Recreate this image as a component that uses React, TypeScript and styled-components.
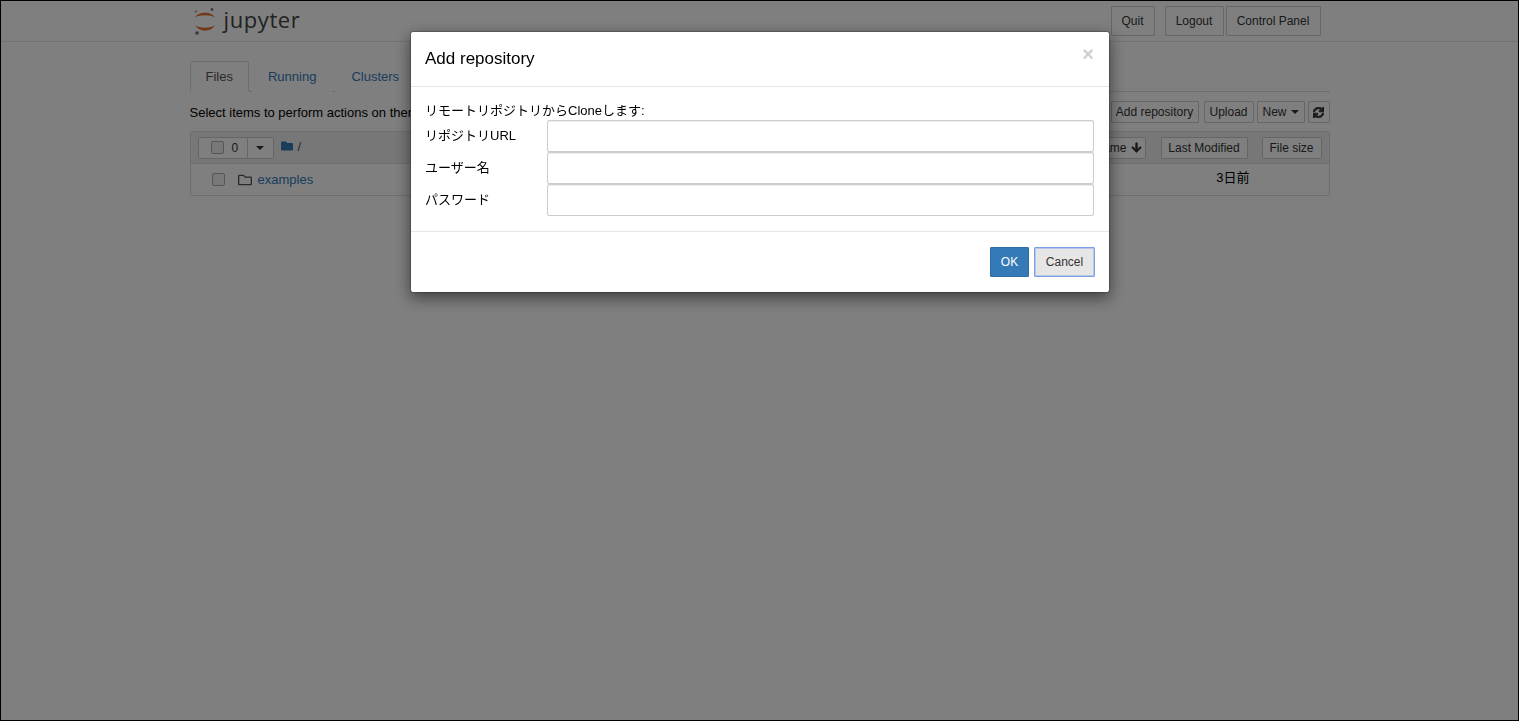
import React from "react";
import styled, { createGlobalStyle } from "styled-components";
import { FaArrowDown, FaFolder, FaRegFolder, FaSync } from "react-icons/fa";

const GlobalStyle = createGlobalStyle`
  * {
    box-sizing: border-box;
  }
  html, body {
    margin: 0;
    padding: 0;
    background: #fff;
    font-family: "Liberation Sans", Arial, sans-serif;
    font-size: 13px;
    color: #000;
  }
`;

const Frame = styled.div`
  height: 721px;
  border: 1px solid #000;
  overflow: hidden;
`;

const Header = styled.div`
  height: 41px;
  border-bottom: 1px solid #e7e7e7;
`;

const Container = styled.div`
  width: 1140px;
  margin: 0 auto;
  display: flex;
  align-items: flex-start;
`;

const Logo = styled.div`
  display: flex;
  align-items: center;
  gap: 6px;
  margin: 5px 0 0 4px;
  height: 30px;
`;

const LogoText = styled.span`
  font-family: "Open Sans", sans-serif;
  font-size: 22px;
  letter-spacing: 0.6px;
  color: #444;
  line-height: 30px;
  margin-top: -5px;
`;

const HeaderButtons = styled.div`
  margin-left: auto;
  margin-right: 9px;
  margin-top: 5px;
  display: flex;
`;

const Button = styled.div<{ $w: number; $h?: number; $ml?: number }>`
  width: ${(p) => p.$w}px;
  height: ${(p) => p.$h ?? 22}px;
  margin-left: ${(p) => p.$ml ?? 0}px;
  border: 1px solid #ccc;
  border-radius: 1px;
  background: #fff;
  color: #333;
  font-size: 12px;
  display: flex;
  align-items: center;
  justify-content: center;
  gap: 4px;
  flex-shrink: 0;
`;

const NameButton = styled(Button)`
  padding-left: 5px;
`;

const Tabs = styled.div`
  width: 1140px;
  height: 31px;
  margin: 19px auto 0;
  display: flex;
  border-bottom: 1px solid #ddd;
`;

const Tab = styled.div<{ $active?: boolean }>`
  height: 31px;
  padding: 0 15px;
  margin-right: 3px;
  font-size: 13px;
  line-height: 30px;
  color: ${(p) => (p.$active ? "#555" : "#337ab7")};
  border: 1px solid ${(p) => (p.$active ? "#ddd" : "transparent")};
  border-bottom-color: ${(p) => (p.$active ? "#fff" : "transparent")};
  border-radius: 2px 2px 0 0;
  background: #fff;
`;

const ToolRow = styled.div`
  width: 1140px;
  margin: 9px auto 0;
  height: 22px;
  display: flex;
  align-items: center;
`;

const ToolText = styled.div`
  font-size: 13px;
  color: #000;
`;

const ToolButtons = styled.div`
  margin-left: auto;
  display: flex;
`;

const Caret = styled.span`
  width: 0;
  height: 0;
  border-left: 4px solid transparent;
  border-right: 4px solid transparent;
  border-top: 4px solid currentColor;
`;

const HeavySync = styled(FaSync)`
  stroke: currentColor;
  stroke-width: 40px;
`;

const List = styled.div`
  width: 1140px;
  margin: 8px auto 0;
  border: 1px solid #ddd;
  border-radius: 2px;
`;

const ListHeader = styled.div`
  height: 32px;
  background: #eee;
  border-bottom: 1px solid #ddd;
  display: flex;
  align-items: center;
  padding-left: 7px;
  padding-right: 7px;
`;

const SelectGroup = styled.div`
  display: flex;
  height: 22px;
  border: 1px solid #ccc;
  border-radius: 1px;
  background: #fff;
`;

const SelectLeft = styled.div`
  width: 49px;
  display: flex;
  align-items: center;
  padding-left: 12px;
  gap: 8px;
  border-right: 1px solid #ccc;
  font-size: 12px;
  color: #333;
`;

const SelectRight = styled.div`
  width: 25px;
  display: flex;
  align-items: center;
  justify-content: center;
  color: #333;
`;

const Check = styled.span`
  width: 13px;
  height: 13px;
  border: 1px solid #adadad;
  border-radius: 2px;
  background: #f1f1f1;
  display: inline-block;
`;

const Crumb = styled.div`
  display: flex;
  align-items: center;
  gap: 5px;
  margin-left: 7px;
  margin-top: -3px;
  color: #337ab7;
  font-size: 13px;
`;

const CrumbSlash = styled.span`
  color: #555;
`;

const SortButtons = styled.div`
  margin-left: auto;
  display: flex;
`;

const HeavyArrow = styled(FaArrowDown)`
  stroke: currentColor;
  stroke-width: 30px;
`;

const ListRow = styled.div`
  height: 31px;
  display: flex;
  align-items: center;
  padding-left: 21px;
`;

const RowIcon = styled.span`
  display: flex;
  margin-left: 13px;
  color: #555;
  font-size: 14px;
`;

const RowLink = styled.span`
  margin-left: 6px;
  color: #337ab7;
  font-size: 13px;
`;

const RowDate = styled.span`
  margin-left: auto;
  margin-right: 79px;
  margin-top: -6px;
  font-size: 13px;
  font-family: "Liberation Sans", "Noto Sans CJK JP", sans-serif;
`;

const Backdrop = styled.div`
  position: fixed;
  inset: 0;
  background: rgba(0, 0, 0, 0.5);
  display: flex;
  justify-content: center;
  align-items: flex-start;
  padding-top: 31px;
  padding-left: 1px;
`;

const Modal = styled.div`
  width: 700px;
  height: 262px;
  background: #fff;
  border: 1px solid rgba(0, 0, 0, 0.2);
  border-radius: 3px;
  box-shadow: 0 5px 15px rgba(0, 0, 0, 0.5);
  background-clip: padding-box;
  font-family: "Liberation Sans", "Noto Sans CJK JP", sans-serif;
`;

const ModalHeader = styled.div`
  height: 55px;
  padding: 0 15px 0 14px;
  border-bottom: 1px solid #e5e5e5;
  display: flex;
  align-items: center;
  justify-content: space-between;
`;

const ModalTitle = styled.div`
  font-size: 17px;
  color: #000;
`;

const Close = styled.span`
  font-size: 20px;
  font-weight: bold;
  line-height: 20px;
  color: #cfcfcf;
  margin-top: -11px;
`;

const ModalBody = styled.div`
  padding: 14px 14px 15px;
  height: 145px;
  border-bottom: 1px solid #e5e5e5;
`;

const Intro = styled.div`
  height: 19px;
  line-height: 19px;
  font-size: 13px;
  color: #000;
`;

const FormRow = styled.div`
  display: grid;
  grid-template-columns: 122px 547px;
  height: 32px;
  align-items: center;
`;

const FormLabel = styled.label`
  font-size: 13px;
  color: #000;
  margin-top: -4px;
`;

const Input = styled.input`
  height: 32px;
  width: 547px;
  border: 1px solid #ccc;
  border-radius: 2px;
  background: #fff;
  box-shadow: inset 0 1px 1px rgba(0, 0, 0, 0.075);
`;

const ModalFooter = styled.div`
  display: flex;
  justify-content: flex-end;
  gap: 5px;
  padding: 15px 14px 0 0;
`;

const OkButton = styled.button`
  width: 39px;
  height: 30px;
  border: 1px solid #2e6da4;
  border-radius: 1px;
  background: #337ab7;
  color: #fff;
  font-family: inherit;
  font-size: 12px;
  padding: 0;
`;

const CancelButton = styled.button`
  width: 61px;
  height: 30px;
  border: 1px solid #7a9fe6;
  border-radius: 1px;
  background: #e6e6e6;
  color: #333;
  font-family: inherit;
  font-size: 12px;
  padding: 0;
  box-shadow: inset 0 0 0 1px #b9c7e6;
`;

const JupyterMark = () => (
  <svg width="24" height="28" viewBox="0 0 24 28">
    <path d="M1 10.5 C4 4 18 4 21 10.5 C17 7.5 5 7.5 1 10.5 Z" fill="#e46e2e" />
    <path d="M1 18 C5 25.5 17 25.5 21 18 C17 21.5 5 21.5 1 18 Z" fill="#e46e2e" />
    <circle cx="18" cy="2.5" r="1.4" fill="#767677" />
    <circle cx="2" cy="4.5" r="0.9" fill="#767677" />
    <circle cx="3" cy="26" r="1.8" fill="#767677" />
  </svg>
);

const App: React.FunctionComponent<{}> = () => {
  return (
    <>
      <GlobalStyle />
      <Frame>
        <Header>
          <Container>
            <Logo>
              <JupyterMark />
              <LogoText>jupyter</LogoText>
            </Logo>
            <HeaderButtons>
              <Button $w={44} $h={30}>Quit</Button>
              <Button $w={59} $h={30} $ml={10}>Logout</Button>
              <Button $w={95} $h={30} $ml={2}>Control Panel</Button>
            </HeaderButtons>
          </Container>
        </Header>
        <Tabs>
          <Tab $active>Files</Tab>
          <Tab>Running</Tab>
          <Tab>Clusters</Tab>
        </Tabs>
        <ToolRow>
          <ToolText>Select items to perform actions on them.</ToolText>
          <ToolButtons>
            <Button $w={88}>Add repository</Button>
            <Button $w={50} $ml={5}>Upload</Button>
            <Button $w={48} $ml={3}>New <Caret /></Button>
            <Button $w={22} $ml={3}><HeavySync size={11} /></Button>
          </ToolButtons>
        </ToolRow>
        <List>
          <ListHeader>
            <SelectGroup>
              <SelectLeft><Check />0</SelectLeft>
              <SelectRight><Caret /></SelectRight>
            </SelectGroup>
            <Crumb>
              <FaFolder size={12} />
              <CrumbSlash>/</CrumbSlash>
            </Crumb>
            <SortButtons>
              <NameButton $w={60}>Name <HeavyArrow size={11} /></NameButton>
              <Button $w={87} $ml={15}>Last Modified</Button>
              <Button $w={60} $ml={14}>File size</Button>
            </SortButtons>
          </ListHeader>
          <ListRow>
            <Check />
            <RowIcon><FaRegFolder /></RowIcon>
            <RowLink>examples</RowLink>
            <RowDate>3日前</RowDate>
          </ListRow>
        </List>
      </Frame>
      <Backdrop>
        <Modal>
          <ModalHeader>
            <ModalTitle>Add repository</ModalTitle>
            <Close>×</Close>
          </ModalHeader>
          <ModalBody>
            <Intro>リモートリポジトリからCloneします:</Intro>
            <FormRow>
              <FormLabel>リポジトリURL</FormLabel>
              <Input type="text" />
            </FormRow>
            <FormRow>
              <FormLabel>ユーザー名</FormLabel>
              <Input type="text" />
            </FormRow>
            <FormRow>
              <FormLabel>パスワード</FormLabel>
              <Input type="password" />
            </FormRow>
          </ModalBody>
          <ModalFooter>
            <OkButton>OK</OkButton>
            <CancelButton>Cancel</CancelButton>
          </ModalFooter>
        </Modal>
      </Backdrop>
    </>
  );
};

export default App;
